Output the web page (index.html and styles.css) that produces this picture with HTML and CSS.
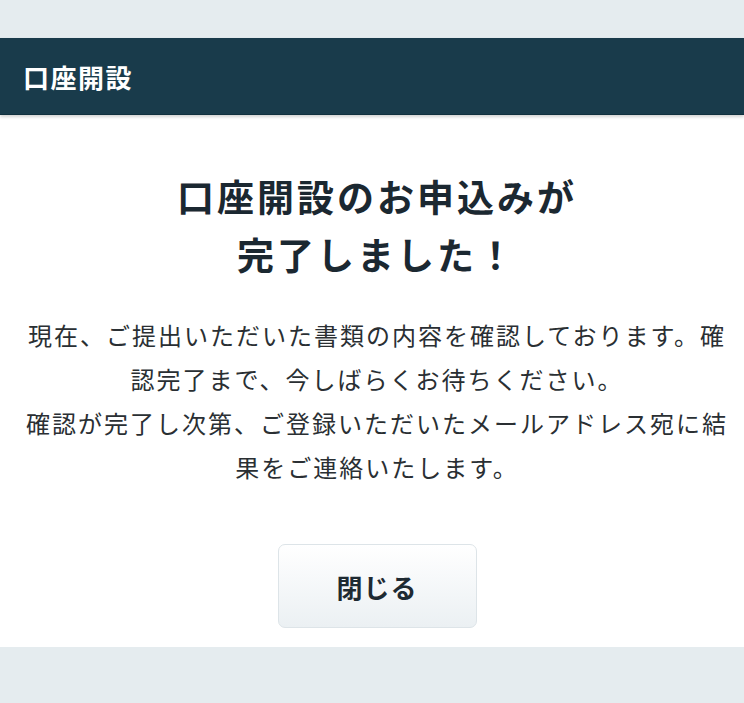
FILE: index.html
```html
<!DOCTYPE html>
<html lang="ja">
<head>
<meta charset="utf-8">
<title>口座開設</title>
<link rel="stylesheet" href="styles.css">
</head>
<body>
<div class="top-space"></div>
<section class="panel">
  <header class="panel-header">口座開設</header>
  <div class="panel-body">
    <h1 class="title">口座開設のお申込みが<br>完了しました！</h1>
    <p class="message">現在、ご提出いただいた書類の内容を確認しております。確認完了まで、今しばらくお待ちください。<br>確認が完了し次第、ご登録いただいたメールアドレス宛に結果をご連絡いたします。</p>
    <div class="actions">
      <button class="close-btn" type="button">閉じる</button>
    </div>
  </div>
</section>
</body>
</html>
```

FILE: styles.css
```css
html, body {
  margin: 0;
  padding: 0;
}
body {
  background: #e5ecef;
  font-family: "Noto Sans CJK JP", "Noto Sans", sans-serif;
  color: #222b31;
}
.top-space {
  height: 38px;
}
.panel {
  background: #ffffff;
  box-shadow: 0 2px 3px rgba(0, 0, 0, 0.12);
}
.panel-header {
  height: 76px;
  background: #193b4b;
  border-bottom: 1px solid #10303e;
  box-shadow: 0 2px 3px rgba(0, 0, 0, 0.18);
  color: #ffffff;
  font-size: 26px;
  font-weight: 700;
  letter-spacing: 1.5px;
  display: flex;
  align-items: center;
  padding-left: 23px;
  position: relative;
}
.panel-body {
  padding: 52px 15px 19px 25px;
  display: flex;
  flex-direction: column;
  align-items: center;
}
.title {
  margin: 0;
  font-size: 37px;
  line-height: 58px;
  letter-spacing: 3px;
  font-weight: 700;
  text-align: center;
  color: #1b2831;
}
.message {
  margin: 30px 0 0;
  font-size: 24px;
  letter-spacing: 2px;
  line-height: 44px;
  text-align: center;
  color: #2a2f33;
}
.actions {
  margin-top: 55px;
  display: flex;
  justify-content: center;
}
.close-btn {
  width: 199px;
  height: 84px;
  border: 1px solid #dde4e8;
  border-radius: 7px;
  background: linear-gradient(to bottom, #ffffff, #ebf0f3);
  font-family: "Noto Sans CJK JP", "Noto Sans", sans-serif;
  font-size: 26px;
  font-weight: 700;
  letter-spacing: 1px;
  color: #1e2a32;
  cursor: pointer;
}
```
